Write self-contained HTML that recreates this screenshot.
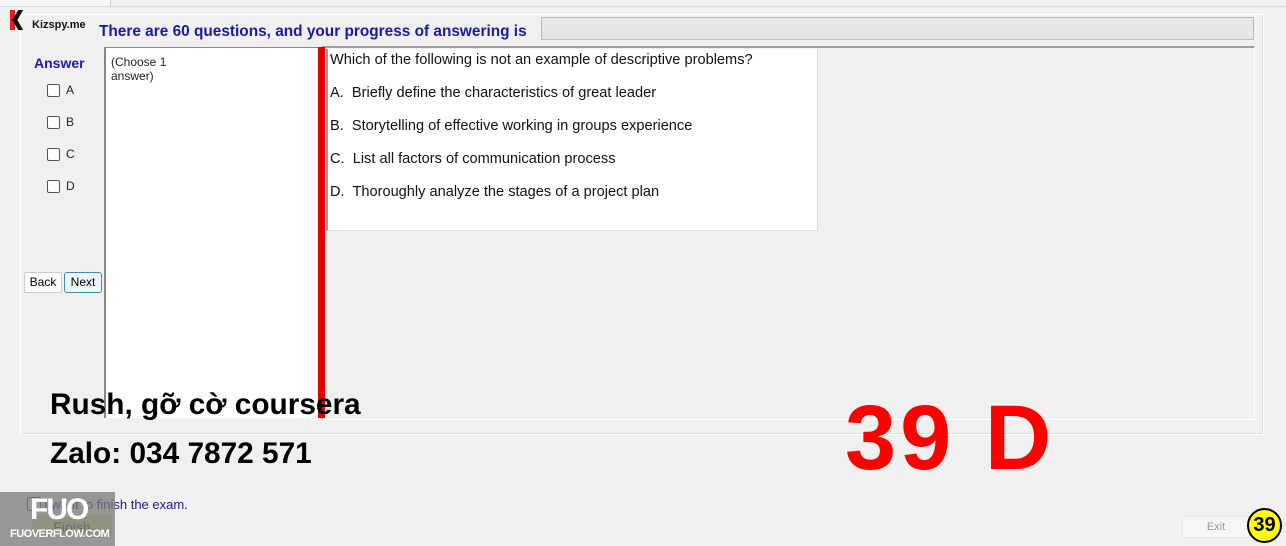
<!DOCTYPE html>
<html><head><style>
body{margin:0;width:1286px;height:546px;background:#f0f0f0;position:relative;overflow:hidden;font-family:"Liberation Sans",sans-serif}
.a{position:absolute}
.cb{position:absolute;width:11px;height:11px;border:1px solid #555;border-radius:2px;background:#fff}
.lbl{position:absolute;font-size:12px;color:#222}
.q{position:absolute;left:330px;font-size:14.6px;color:#111}
</style></head><body>
<div class="a" style="left:0;top:0;width:110px;height:6px;border-right:1px solid #ccc;border-bottom:1px solid #ddd;background:#f7f7f7"></div>
<div class="a" style="left:110px;top:6px;width:1176px;height:1px;background:#ddd"></div>
<div class="a" style="left:20px;top:14px;width:1242px;height:419px;border:1px solid #fff;box-shadow:inset -1px -1px 0 #ddd"></div>
<div class="a" style="left:10px;top:10px;width:5px;height:20px;background:#e02020"></div>
<div class="a" style="left:15px;top:10px;width:5px;height:11px;background:#111;transform:skewX(-30deg)"></div>
<div class="a" style="left:15px;top:19px;width:5px;height:11px;background:#111;transform:skewX(30deg)"></div>
<div class="a" style="left:32px;top:19px;font-size:11px;font-weight:bold;color:#111">Kizspy.me</div>
<div class="a" style="left:99px;top:23px;font-size:15.4px;font-weight:bold;color:#1a1aa0">There are 60 questions, and your progress of answering is</div>
<div class="a" style="left:541px;top:17px;width:711px;height:21px;background:#e6e6e6;border:1px solid #bcbcbc"></div>
<div class="a" style="left:34px;top:55px;font-size:14px;font-weight:bold;color:#1a1ab0">Answer</div>
<div class="cb" style="left:47px;top:84px"></div><div class="lbl" style="left:66px;top:83px">A</div>
<div class="cb" style="left:47px;top:116px"></div><div class="lbl" style="left:66px;top:115px">B</div>
<div class="cb" style="left:47px;top:148px"></div><div class="lbl" style="left:66px;top:147px">C</div>
<div class="cb" style="left:47px;top:180px"></div><div class="lbl" style="left:66px;top:179px">D</div>
<div class="a" style="left:24px;top:272px;width:36px;height:19px;border:1px solid #ccc;border-radius:2px;background:#fbfbfb;font-size:12px;text-align:center;line-height:19px">Back</div>
<div class="a" style="left:64px;top:272px;width:36px;height:19px;border:1px solid #3c8ac0;border-radius:3px;background:#eef5fa;font-size:12px;text-align:center;line-height:19px">Next</div>
<div class="a" style="left:322px;top:46px;width:931px;height:371px;border-top:2px solid #a0a0a0;border-left:1px solid #a0a0a0;border-right:1px solid #fff;border-bottom:1px solid #fff"></div>
<div class="a" style="left:104px;top:47px;width:212px;height:370px;background:#fff;border-left:2px solid #888;border-top:1px solid #888"></div>
<div class="a" style="left:111px;top:55px;font-size:12px;color:#222;line-height:14px">(Choose 1<br>answer)</div>
<div class="a" style="left:318px;top:47px;width:7px;height:371px;background:#e00000"></div>
<div class="a" style="left:326px;top:49px;width:489px;height:181px;background:#fff;border-left:2px solid #999;border-right:1px solid #ddd;border-bottom:1px solid #ddd"></div>
<div class="q" style="top:52px">Which of the following is not an example of descriptive problems?</div>
<div class="q" style="top:85px">A.&nbsp; Briefly define the characteristics of great leader</div>
<div class="q" style="top:118px">B.&nbsp; Storytelling of effective working in groups experience</div>
<div class="q" style="top:151px">C.&nbsp; List all factors of communication process</div>
<div class="q" style="top:184px">D.&nbsp; Thoroughly analyze the stages of a project plan</div>
<div class="a" style="left:50px;top:388px;font-size:29.8px;font-weight:bold;color:#000">Rush, gỡ cờ coursera</div>
<div class="a" style="left:50px;top:437px;font-size:29.8px;font-weight:bold;color:#000">Zalo: 034 7872 571</div>
<div class="a" style="left:845px;top:388px;font-size:92px;font-weight:bold;color:#ff0000;line-height:100px;letter-spacing:4px">39 D</div>
<div class="cb" style="left:27px;top:497px;width:12px;height:12px"></div>
<div class="a" style="left:44px;top:497px;font-size:13px;color:#1a1a90">I want to finish the exam.</div>
<div class="a" style="left:32px;top:515px;width:80px;height:22px;background:#dcdca0;font-size:14px;color:#444;text-align:center;line-height:24px">Finish</div>
<div class="a" style="left:0;top:492px;width:115px;height:54px;background:rgba(120,120,120,0.75)"></div>
<div class="a" style="left:30px;top:493px;font-size:30px;font-weight:bold;color:#fff;letter-spacing:-2px">FUO</div>
<div class="a" style="left:10px;top:528px;font-size:11px;font-weight:bold;color:#fff;letter-spacing:-0.5px">FUOVERFLOW.COM</div>
<div class="a" style="left:1182px;top:516px;width:66px;height:20px;background:#f6f6f6;border:1px solid #e8e8e8;font-size:11px;color:#999;text-align:center;line-height:20px">Exit</div>
<div class="a" style="left:1247px;top:508px;width:35px;height:35px;border-radius:50%;background:#ffff00;border:2px solid #000;box-sizing:border-box;font-size:20px;font-weight:bold;text-align:center;line-height:31px;color:#000">39</div>
</body></html>
